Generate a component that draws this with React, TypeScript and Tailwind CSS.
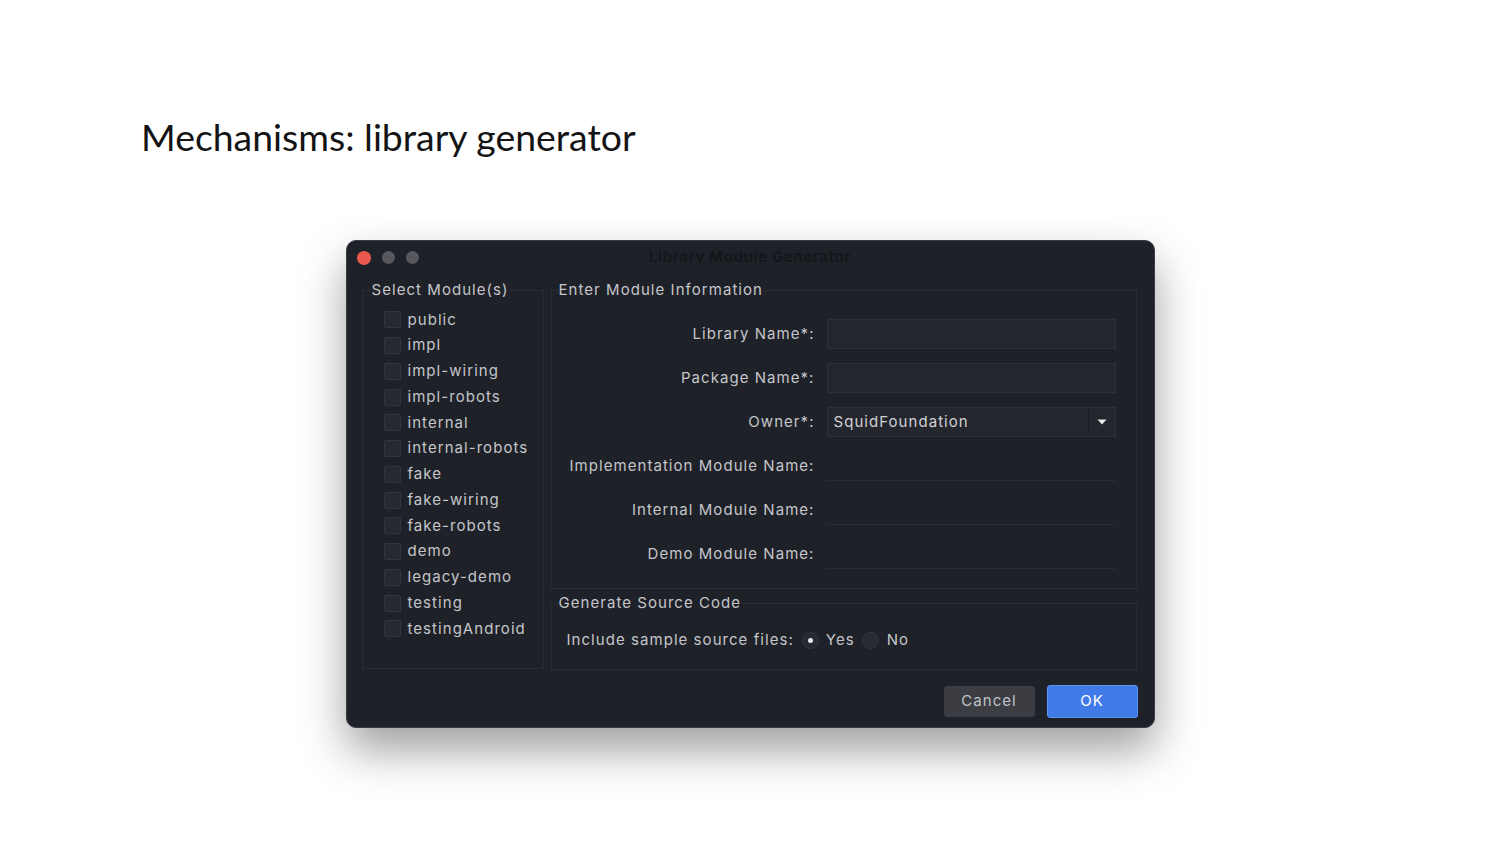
import React from "react";

const modules = [
  "public",
  "impl",
  "impl-wiring",
  "impl-robots",
  "internal",
  "internal-robots",
  "fake",
  "fake-wiring",
  "fake-robots",
  "demo",
  "legacy-demo",
  "testing",
  "testingAndroid",
];

const fields: { label: string; kind: "input" | "select" | "plain"; value?: string }[] = [
  { label: "Library Name*:", kind: "input" },
  { label: "Package Name*:", kind: "input" },
  { label: "Owner*:", kind: "select", value: "SquidFoundation" },
  { label: "Implementation Module Name:", kind: "plain" },
  { label: "Internal Module Name:", kind: "plain" },
  { label: "Demo Module Name:", kind: "plain" },
];

function Field({ label, kind, value }: (typeof fields)[number]) {
  return (
    <div className="flex h-[30px] items-center">
      <span className="w-[263px] shrink-0 text-right">{label}</span>
      <div className="ml-[12px] h-full w-[289px]">
        {kind === "input" && (
          <div className="h-full w-full border border-[#2e3037] bg-[#24262d]" />
        )}
        {kind === "plain" && (
          <div className="h-full w-full border-b border-[#2a2c33]" />
        )}
        {kind === "select" && (
          <div className="flex h-full w-full items-center border border-[#2e3037] bg-[#24262d]">
            <span className="flex-1 pl-[6px] text-[#cfd1d6]">{value}</span>
            <span className="flex h-full w-[27px] items-center justify-center border-l border-[#1c1e24]">
              <svg width="10" height="6" viewBox="0 0 10 6">
                <path d="M0.5 0.5h9L5 5.5z" fill="#e6e7ea" />
              </svg>
            </span>
          </div>
        )}
      </div>
    </div>
  );
}

function Radio({ checked }: { checked?: boolean }) {
  return (
    <span className="flex h-[17px] w-[17px] items-center justify-center rounded-full border border-[#34363d] bg-[#282a31]">
      {checked && <span className="h-[5px] w-[5px] rounded-full bg-[#e8e9ec]" />}
    </span>
  );
}

export default function App() {
  return (
    <div className="min-h-[844px] w-full bg-white font-['Inter','Liberation_Sans',sans-serif]">
      <h1 className="pl-[141px] pt-[113px] font-['Lato','Open_Sans',sans-serif] text-[37.4px] leading-[48px] text-[#141414]">
        Mechanisms: library generator
      </h1>

      <div className="mx-auto mt-[79px] flex h-[488px] w-[809px] flex-col rounded-[10px] border border-[#3a3c42] bg-[#1f2128] text-[15px] tracking-[1.05px] text-[#c4c6cb] shadow-[0_22px_45px_rgba(0,0,0,0.38)]">
        {/* title bar */}
        <div className="flex h-[33px] shrink-0 items-center px-[10px]">
          <div className="flex gap-[11px]">
            <span className="h-[14px] w-[14px] rounded-full bg-[#e9574e]" />
            <span className="h-[13px] w-[13px] rounded-full bg-[#56585d]" />
            <span className="h-[13px] w-[13px] rounded-full bg-[#56585d]" />
          </div>
          <span className="flex-1 pr-[62px] text-center text-[15px] font-bold tracking-[0.6px] text-[#15161a]">
            Library Module Generator
          </span>
        </div>

        {/* body */}
        <div className="flex gap-[7px] pl-[15px] pr-[17px] pt-[6px]">
          <fieldset className="h-[389px] w-[182px] border border-[#2a2c33]">
            <legend className="ml-[8px] px-[1px] leading-[20px]">Select Module(s)</legend>
            <div className="flex flex-col pl-[21px] pt-[7px]">
              {modules.map((m) => (
                <label key={m} className="flex h-[25.75px] items-center gap-[7px]">
                  <span className="h-[17px] w-[17px] rounded-[2px] border border-[#33353c] bg-[#272930]" />
                  <span>{m}</span>
                </label>
              ))}
            </div>
          </fieldset>

          <div className="flex flex-1 flex-col gap-[4px]">
            <fieldset className="h-[309px] border border-[#2a2c33]">
              <legend className="ml-[6px] px-[1px] leading-[20px]">Enter Module Information</legend>
              <div className="flex flex-col gap-[14px] pt-[19px]">
                {fields.map((f) => (
                  <Field key={f.label} {...f} />
                ))}
              </div>
            </fieldset>

            <fieldset className="h-[77px] border border-[#2a2c33]">
              <legend className="ml-[6px] px-[1px] leading-[20px]">Generate Source Code</legend>
              <div className="flex items-center pl-[15px] pt-[16px]">
                <span>Include sample source files:</span>
                <span className="ml-[8px]">
                  <Radio checked />
                </span>
                <span className="ml-[7px]">Yes</span>
                <span className="ml-[7px]">
                  <Radio />
                </span>
                <span className="ml-[8px]">No</span>
              </div>
            </fieldset>
          </div>
        </div>

        {/* buttons */}
        <div className="mt-auto flex items-center justify-end gap-[12px] pb-[9px] pr-[16px]">
          <button className="h-[31px] w-[91px] rounded-[3px] bg-[#3b3d43] text-[#c0c2c7]">
            Cancel
          </button>
          <button className="h-[33px] w-[91px] rounded-[3px] border border-[#5f93f0] bg-[#3f7ae6] text-white">
            OK
          </button>
        </div>
      </div>
    </div>
  );
}
